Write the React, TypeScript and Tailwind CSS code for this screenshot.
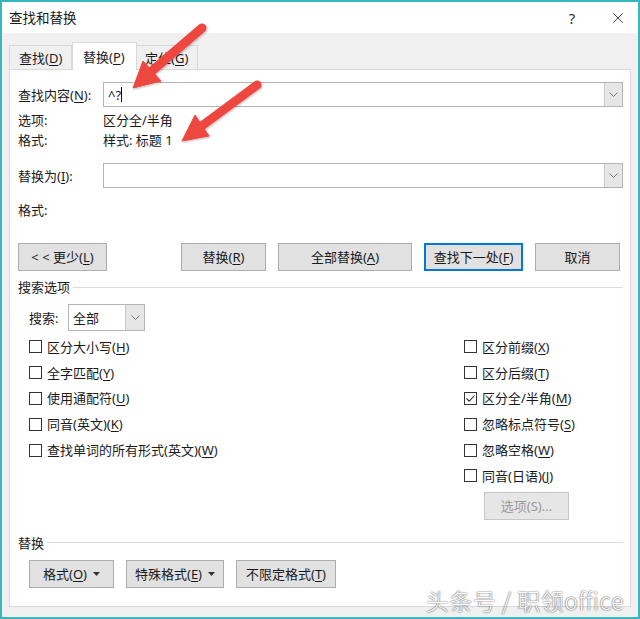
import { X } from 'lucide-react'

// underline the character after '&'
function Acc({ t }: { t: string }) {
  const i = t.indexOf('&')
  if (i < 0) return <>{t}</>
  return (
    <>
      {t.slice(0, i)}
      <u className="underline-offset-2">{t[i + 1]}</u>
      {t.slice(i + 2)}
    </>
  )
}

function Btn({ t, w, dflt, caret, disabled }: { t: string; w: string; dflt?: boolean; caret?: boolean; disabled?: boolean }) {
  return (
    <div
      className={`${w} h-[28px] flex items-center justify-center gap-[6px] ${
        dflt
          ? 'border-2 border-[#0078d7] bg-[#e1e1e1]'
          : disabled
          ? 'border border-[#c6c6c6] bg-[#e6e6e6] text-[#9a9a9a]'
          : 'border border-[#adadad] bg-[#e1e1e1]'
      }`}
    >
      <span>
        <Acc t={t} />
      </span>
      {caret && (
        <svg width="7" height="4" viewBox="0 0 7 4">
          <path d="M0 0h7L3.5 4z" fill="#333" />
        </svg>
      )}
    </div>
  )
}

function Chevron() {
  return (
    <svg width="9" height="5" viewBox="0 0 9 5" fill="none">
      <path d="M0.5 0.5L4.5 4.5L8.5 0.5" stroke="#7a7a7a" strokeWidth="1" />
    </svg>
  )
}

function Combo({ children }: { children?: React.ReactNode }) {
  return (
    <div className="flex-1 h-[25px] border border-[#b4b4b4] bg-white flex">
      <div className="flex-1 flex items-center pl-[3px]">{children}</div>
      <div className="w-[18px] h-full bg-[#e6e6e6] border-l border-[#c8c8c8] flex items-center justify-center">
        <Chevron />
      </div>
    </div>
  )
}

function Check({ t, checked }: { t: string; checked?: boolean }) {
  return (
    <div className="h-[25.8px] flex items-center gap-[5px]">
      <div className="w-[13px] h-[13px] border border-[#333] bg-white flex items-center justify-center">
        {checked && (
          <svg width="11" height="11" viewBox="0 0 11 11" fill="none">
            <path d="M1.5 5.5L4.2 8.2L9.5 2.5" stroke="#333" strokeWidth="1.1" />
          </svg>
        )}
      </div>
      <span>
        <Acc t={t} />
      </span>
    </div>
  )
}

function Group({ t }: { t: string }) {
  return (
    <div className="h-[16px] flex items-center gap-[3px]">
      <span>{t}</span>
      <div className="flex-1 h-px bg-[#dcdcdc]" />
    </div>
  )
}

export default function App() {
  return (
    <div className="relative w-[640px] h-[619px] border-2 border-[#3ab5c2] bg-[#f0f0f0] flex flex-col text-[13px] leading-[16px] text-[#1a1a1a] font-['Noto_Sans','Noto_Sans_CJK_SC',sans-serif]">
      {/* title bar */}
      <div className="h-[31px] bg-white flex items-center pl-[7px]">
        <span className="flex-1 text-[13.5px]">查找和替换</span>
        <span className="w-[20px] text-center text-[15px] text-[#333]">?</span>
        <div className="w-[56px] flex justify-center pl-[16px]">
          <X className="w-[18px] h-[18px] text-[#333]" strokeWidth={1.2} />
        </div>
      </div>

      <div className="px-[7px]">
        {/* tabs */}
        <div className="h-[36px] flex items-end">
          <div className="w-[63px] h-[24px] border border-b-0 border-[#d9d9d9] bg-[#f0f0f0] flex items-center pl-[9px]">
            <Acc t="查找(&D)" />
          </div>
          <div className="relative z-10 w-[65px] h-[28px] -mb-px border border-b-0 border-[#d9d9d9] bg-white flex items-center pl-[10px]">
            <Acc t="替换(&P)" />
          </div>
          <div className="w-[61px] h-[24px] border border-b-0 border-l-0 border-[#d9d9d9] bg-[#f0f0f0] flex items-center pl-[8px]">
            <Acc t="定位(&G)" />
          </div>
        </div>

        {/* panel */}
        <div className="w-[622px] h-[538px] border border-[#d9d9d9] bg-white pl-[8px] pr-[7px] flex flex-col">
          <div className="mt-[12px] flex items-center">
            <span className="w-[85px]">
              <Acc t="查找内容(&N):" />
            </span>
            <Combo>
              <span className="ml-[1px]">^?</span>
              <span className="w-px h-[15px] bg-black" />
            </Combo>
          </div>
          <div className="mt-[3px] h-[20px] flex items-center">
            <span className="w-[85px]">选项:</span>
            <span>区分全/半角</span>
          </div>
          <div className="h-[20px] flex items-center">
            <span className="w-[85px]">格式:</span>
            <span>样式: 标题 1</span>
          </div>
          <div className="mt-[13px] flex items-center">
            <span className="w-[85px]">
              <Acc t="替换为(&I):" />
            </span>
            <Combo />
          </div>
          <div className="mt-[12px] h-[20px] flex items-center">格式:</div>

          {/* buttons */}
          <div className="mt-[23px] flex">
            <Btn t="< < 更少(&L)" w="w-[89px]" />
            <div className="ml-[74px] flex gap-[12px]">
              <Btn t="替换(&R)" w="w-[85px]" />
              <Btn t="全部替换(&A)" w="w-[134px]" />
              <Btn t="查找下一处(&F)" w="w-[99px]" dflt />
              <Btn t="取消" w="w-[85px]" />
            </div>
          </div>

          <div className="mt-[8px]">
            <Group t="搜索选项" />
          </div>

          <div className="pl-[11px]">
            <div className="mt-[9px] flex items-center">
              <span className="w-[39px]">搜索:</span>
              <div className="w-[77px] h-[27px] border border-[#b4b4b4] bg-white flex">
                <div className="flex-1 flex items-center pl-[4px]">全部</div>
                <div className="w-[19px] h-full bg-[#e6e6e6] border-l border-[#c8c8c8] flex items-center justify-center">
                  <Chevron />
                </div>
              </div>
            </div>
            <div className="mt-[3px] flex">
              <div className="w-[435px] flex flex-col">
                <Check t="区分大小写(&H)" />
                <Check t="全字匹配(&Y)" />
                <Check t="使用通配符(&U)" />
                <Check t="同音(英文)(&K)" />
                <Check t="查找单词的所有形式(英文)(&W)" />
              </div>
              <div className="flex flex-col">
                <Check t="区分前缀(&X)" />
                <Check t="区分后缀(&T)" />
                <Check t="区分全/半角(&M)" checked />
                <Check t="忽略标点符号(&S)" />
                <Check t="忽略空格(&W)" />
                <Check t="同音(日语)(&J)" />
                <div className="mt-[3px] ml-[20px]">
                  <Btn t="选项(S)..." w="w-[85px]" disabled />
                </div>
              </div>
            </div>
          </div>

          <div className="mt-[15px]">
            <Group t="替换" />
          </div>
          <div className="mt-[9px] pl-[11px] flex gap-[12px]">
            <Btn t="格式(&O)" w="w-[85px]" caret />
            <Btn t="特殊格式(&E)" w="w-[98px]" caret />
            <Btn t="不限定格式(&T)" w="w-[100px]" />
          </div>
        </div>
      </div>

      {/* annotation arrows */}
      <svg className="absolute -left-[2px] -top-[2px] pointer-events-none" width="640" height="619" viewBox="0 0 640 619">
        <defs>
          <filter id="sh" x="-20%" y="-20%" width="140%" height="140%">
            <feDropShadow dx="1" dy="1" stdDeviation="1.2" floodColor="#000" floodOpacity="0.25" />
          </filter>
        </defs>
        <g fill="#ee4640" stroke="#ee4640" filter="url(#sh)">
          <line x1="202" y1="28" x2="153" y2="70" strokeWidth="9" strokeLinecap="round" />
          <polygon points="133,88 143,61 161,81" strokeWidth="1" strokeLinejoin="round" />
          <line x1="257" y1="85" x2="203" y2="125" strokeWidth="9" strokeLinecap="round" />
          <polygon points="182,141 195,115 209,136" strokeWidth="1" strokeLinejoin="round" />
        </g>
      </svg>

      {/* watermark */}
      <div className="absolute left-[424px] top-[583px] text-[23px] leading-[30px] tracking-[0.5px] font-light text-white font-['Noto_Sans_CJK_SC',sans-serif] [text-shadow:0_0_2px_rgba(0,0,0,0.6),0_0_1px_rgba(0,0,0,0.5)]">
        头条号 / 职领office
      </div>
    </div>
  )
}
